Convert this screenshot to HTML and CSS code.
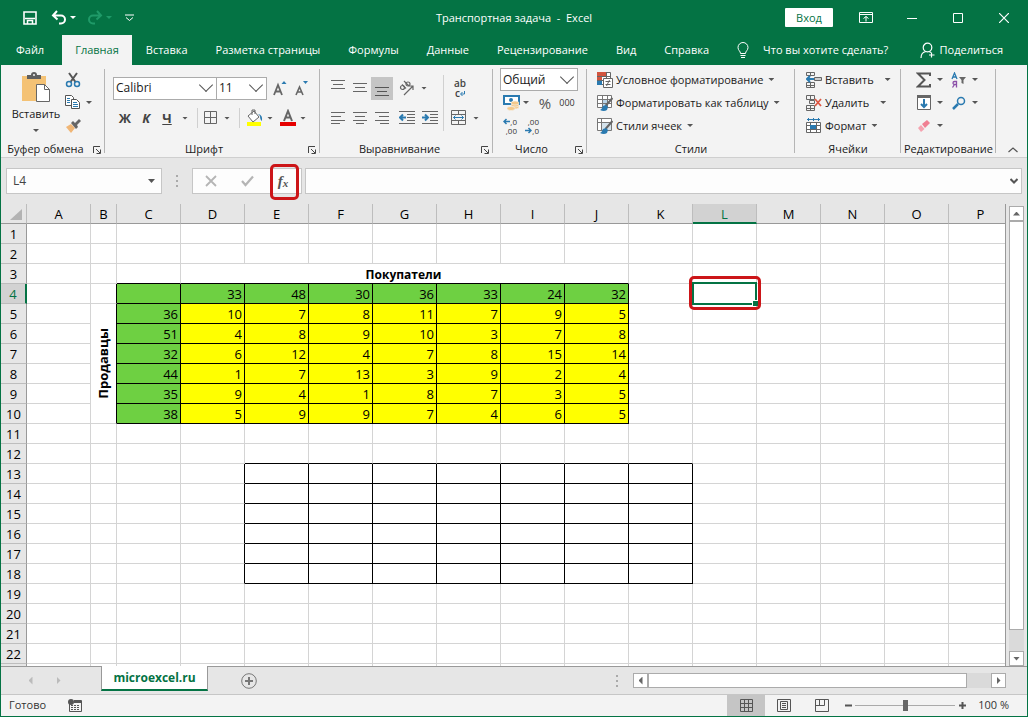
FILE: index.html
```html
<!DOCTYPE html>
<html lang="ru">
<head>
<meta charset="utf-8">
<title>Транспортная задача - Excel</title>
<link rel="stylesheet" href="styles.css">
</head>
<body class="window">
<header class="titlebar">
  <div class="quick">
    <button class="tool" aria-label="Сохранить"><svg width="16" height="16" viewBox="0 0 16 16" fill="none" stroke="#fff" stroke-width="1.600"><path d="M2 2h12v12H2zM3 8.500h10"/><path d="M5.500 14v-3.500h5V14" stroke-width="1.500"/></svg></button>
    <button class="tool" aria-label="Отменить"><svg width="16" height="16" viewBox="0 0 16 16" fill="none" stroke="#fff" stroke-width="2"><path d="M6 1 2 5.500 6.500 9.500M2.500 5.500H10a3.500 3.500 0 0 1 0 8H8"/></svg></button>
    <i class="arrow light"></i>
    <button class="tool redo" aria-label="Повторить"><svg width="16" height="16" viewBox="0 0 16 16" fill="none" stroke="#1f9a68" stroke-width="2"><path d="m10 1 4 4.500-4.500 4M13.500 5.500H6a3.500 3.500 0 0 0 0 8h2"/></svg></button>
    <i class="arrow dim"></i>
    <button class="tool custom" aria-label="Настройка панели"><svg width="9" height="8" viewBox="0 0 9 8" fill="none" stroke="#fff"><path d="M0 1h9M1 3.500l3.500 3L8 3.500"/></svg></button>
  </div>
  <h1 class="doc-title">Транспортная задача&nbsp; -&nbsp; Excel</h1>
  <div class="win-controls">
    <button class="signin">Вход</button>
    <button class="tool" aria-label="Параметры ленты"><svg width="14" height="12" viewBox="0 0 14 12" fill="none" stroke="#fff"><path d="M.5.5h13v10H.5zM.5 2.500h13M7 9.500v-5M4.500 6.500 7 4.500l2.500 2"/></svg></button>
    <button class="tool" aria-label="Свернуть"><svg width="10" height="10" viewBox="0 0 10 10" stroke="#fff"><path d="M0 5.500h10"/></svg></button>
    <button class="tool" aria-label="Развернуть"><svg width="10" height="10" viewBox="0 0 10 10" fill="none" stroke="#fff"><path d="M.5.500h9v9h-9z"/></svg></button>
    <button class="tool" aria-label="Закрыть"><svg width="10" height="10" viewBox="0 0 10 10" stroke="#fff" stroke-width="1.200"><path d="m0 0 10 10M10 0 0 10"/></svg></button>
  </div>
</header>
<nav class="tabs">
  <button class="tab file">Файл</button>
  <button class="tab active">Главная</button>
  <button class="tab">Вставка</button>
  <button class="tab">Разметка страницы</button>
  <button class="tab">Формулы</button>
  <button class="tab">Данные</button>
  <button class="tab">Рецензирование</button>
  <button class="tab">Вид</button>
  <button class="tab">Справка</button>
  <button class="tab tell"><svg width="12" height="17" viewBox="0 0 12 17" fill="none" stroke="#fff"><path d="M3.500 11.500C3.500 9 1 8.500 1 5.500a5 5 0 0 1 10 0c0 3-2.500 3.500-2.500 6zM3.500 13.500h5M4 15.500h4"/></svg>Что вы хотите сделать?</button>
  <button class="tab share"><svg width="16" height="17" viewBox="0 0 16 17" fill="none" stroke="#fff" stroke-width="1.200"><circle cx="7.500" cy="5.500" r="4.300"/><path d="M1 16c0-4 2-6 5-6.500M9 9.500l2 1M11.500 10.500v5M9 13h5.500"/></svg>Поделиться</button>
</nav>

<section class="ribbon">
  <div class="group clipboard">
    <div class="body">
      <button class="paste"><svg width="30" height="31" viewBox="0 0 30 31"><path d="M1 4h24v25H1z" fill="#f4c275"/><path d="M6 3h4a3 3 0 0 1 6 0h4v4H6z" fill="#5f5f5f"/><circle cx="13" cy="3" r="1" fill="#f3f3f3"/><path d="M15.500 12.500h8l5 5v12h-13z" fill="#fff" stroke="#666"/><path d="M23.500 12.500v5h5" fill="none" stroke="#666"/></svg><span>Вставить</span><i class="arrow"></i></button>
      <div class="stack">
        <div class="row"><button class="tool" aria-label="Вырезать"><svg width="16" height="16" viewBox="0 0 16 16" fill="none"><path d="m4 1 6.500 9M12 1 5.500 10" stroke="#555" stroke-width="2"/><circle cx="4" cy="12" r="2.500" stroke="#2a7ab0" stroke-width="1.500"/><circle cx="12" cy="12" r="2.500" stroke="#2a7ab0" stroke-width="1.500"/></svg></button></div>
        <div class="row"><button class="tool" aria-label="Копировать"><svg width="16" height="15" viewBox="0 0 16 15" fill="#fff" stroke="#555"><path d="M.500.500h6l2 2v8h-8z"/><path d="M6.500 4.500h5l3 3v6h-8z"/><path d="M2 3.500h3M2 5.500h3M2 7.500h3M8 7.500h4M8 9.500h5M8 11.500h5" stroke="#2a7ab0"/></svg></button><i class="arrow"></i></div>
        <div class="row"><button class="tool" aria-label="Формат по образцу"><svg width="16" height="15" viewBox="0 0 16 15"><path d="m1 9 5-3 4 4-4 5z" fill="#f0b676"/><path d="m6 5 2-2 2 2 4-4 2 2-4 4 1 2-2 2z" fill="#666"/></svg></button></div>
      </div>
    </div>
    <div class="caption">Буфер обмена<button class="launch" aria-label="Параметры буфера"><svg width="8" height="8" viewBox="0 0 8 8" fill="none" stroke="#444"><path d="M.5 7V.5H7M3 3l4 4M7.500 3.500v4h-4"/></svg></button></div>
  </div>

  <div class="group font">
    <div class="body two">
      <div class="row">
        <label class="combo face"><select aria-label="Шрифт"><option>Calibri</option></select></label>
        <label class="combo size"><select aria-label="Размер"><option>11</option></select></label>
        <button class="tool w22" aria-label="Увеличить шрифт"><svg width="15" height="17" viewBox="0 0 15 17" fill="none" stroke="#666" stroke-width="1.800"><path d="m1 15 4-10 4 10M2.500 11.500h5"/><path d="m8.500 4 2.500-3 2.500 3z" fill="#2a7ab0" stroke="none"/></svg></button>
        <button class="tool w22" aria-label="Уменьшить шрифт"><svg width="14" height="17" viewBox="0 0 14 17" fill="none" stroke="#666" stroke-width="1.600"><path d="m1 15 3.500-8L8 15M2.500 12h4"/><path d="m8 1 2.500 3L13 1z" fill="#2a7ab0" stroke="none"/></svg></button>
      </div>
      <div class="row">
        <button class="tool w24 letter">Ж</button><button class="tool w18 letter italic">К</button><button class="tool w24 letter under">Ч</button><i class="arrow"></i>
        <i class="bar"></i>
        <button class="tool" aria-label="Границы"><svg width="14" height="14" viewBox="0 0 14 14" fill="none" stroke="#666"><path d="M.500.500h12v12H.500zM6.500.500v12M.500 6.500h12"/></svg></button><i class="arrow wide"></i>
        <i class="bar"></i>
        <button class="tool" aria-label="Цвет заливки"><svg width="18" height="18" viewBox="0 0 18 18"><path d="M1 13h14v4H1z" fill="#ff0"/><path d="m2 7 6-5 5 6-6 5z" fill="#fff" stroke="#666"/><path d="M6 6V1h3v4" fill="none" stroke="#666"/><path d="M12 5q5 1 4 7-2-1-2-5z" fill="#2a7ab0"/></svg></button><i class="arrow"></i>
        <button class="tool push-l" aria-label="Цвет текста"><svg width="18" height="18" viewBox="0 0 18 18"><path d="M1 13h16v4H1z" fill="#e60000"/><path d="m5 12 4-10 4 10M6.500 8.500h5" fill="none" stroke="#666" stroke-width="2"/></svg></button><i class="arrow"></i>
      </div>
    </div>
    <div class="caption">Шрифт<button class="launch" aria-label="Параметры шрифта"><svg width="8" height="8" viewBox="0 0 8 8" fill="none" stroke="#444"><path d="M.5 7V.5H7M3 3l4 4M7.500 3.500v4h-4"/></svg></button></div>
  </div>

  <div class="group align">
    <div class="body cols">
      <div class="two">
        <div class="row">
          <button class="tool w22" aria-label="По верхнему краю"><svg width="14" height="16" viewBox="0 0 14 16" stroke="#666"><path d="M0 .500h14M2 4.500h10M0 8.500h14"/></svg></button>
          <button class="tool w22" aria-label="По середине"><svg width="14" height="16" viewBox="0 0 14 16" stroke="#666"><path d="M0 3.500h14M2 7.500h10M0 11.500h14"/></svg></button>
          <button class="tool w22 pressed" aria-label="По нижнему краю"><svg width="14" height="16" viewBox="0 0 14 16" stroke="#555"><path d="M0 7.500h14M2 11.500h10M0 15.500h14"/></svg></button>
          <button class="tool w28" aria-label="Ориентация"><svg width="16" height="16" viewBox="0 0 16 16" fill="none" stroke="#666" stroke-width="1.200"><circle cx="3.500" cy="7.500" r="2"/><path d="m3 4.500 4 4M5 1l5 5"/><circle cx="9" cy="4" r="2"/><path d="m5 15 9-9M14 10V6h-4"/></svg></button><i class="arrow near"></i>
        </div>
        <div class="row">
          <button class="tool w22" aria-label="По левому краю"><svg width="14" height="12" viewBox="0 0 14 12" stroke="#666"><path d="M0 .500h14M0 4.500h10M0 8.500h14M0 11.500h9"/></svg></button>
          <button class="tool w22" aria-label="По центру"><svg width="14" height="12" viewBox="0 0 14 12" stroke="#666"><path d="M0 .500h14M2 4.500h10M0 8.500h14M3 11.500h8"/></svg></button>
          <button class="tool w22" aria-label="По правому краю"><svg width="14" height="12" viewBox="0 0 14 12" stroke="#666"><path d="M0 .500h14M4 4.500h10M0 8.500h14M5 11.500h9"/></svg></button>
          <button class="tool w28" aria-label="Уменьшить отступ"><svg width="16" height="14" viewBox="0 0 16 14" fill="none" stroke="#666"><path d="M0 .500h16M8 3.500h8M8 6.500h8M8 9.500h8M0 12.500h16"/><path d="M7 6.500H1M4 3.500l-3 3 3 3" stroke="#2a7ab0" stroke-width="2"/></svg></button>
          <button class="tool w18" aria-label="Увеличить отступ"><svg width="16" height="14" viewBox="0 0 16 14" fill="none" stroke="#666"><path d="M0 .500h16M8 3.500h8M8 6.500h8M8 9.500h8M0 12.500h16"/><path d="M0 6.500h6M3 3.500l3 3-3 3" stroke="#2a7ab0" stroke-width="2"/></svg></button>
        </div>
      </div>
      <i class="bar tall"></i>
      <div class="two">
        <div class="row"><button class="tool wrap" aria-label="Перенести текст"><span>ab</span><span>c<svg width="5" height="5" viewBox="0 0 5 5" fill="none" stroke="#2a7ab0"><path d="M4.500 0v3H1M2.500 1 .5 3l2 2"/></svg></span></button></div>
        <div class="row"><button class="tool" aria-label="Объединить"><svg width="16" height="16" viewBox="0 0 16 16" fill="none" stroke="#666"><path d="M.500.500h14v14H.500zM.500 4.500h14M.500 10.500h14M7.500.500v4M7.500 10.500v4"/><path d="M2.500 7.500h10M4.500 5.500l-2 2 2 2M10.500 5.500l2 2-2 2" stroke="#2a7ab0"/></svg></button><i class="arrow wide"></i></div>
      </div>
    </div>
    <div class="caption">Выравнивание<button class="launch" aria-label="Параметры выравнивания"><svg width="8" height="8" viewBox="0 0 8 8" fill="none" stroke="#444"><path d="M.5 7V.5H7M3 3l4 4M7.500 3.500v4h-4"/></svg></button></div>
  </div>

  <div class="group number">
    <div class="body stack">
      <div class="row"><label class="combo format"><select aria-label="Числовой формат"><option>Общий</option></select></label></div>
      <div class="row inset"><button class="tool" aria-label="Денежный формат"><svg width="17" height="17" viewBox="0 0 17 17"><path d="M1 2h15v8H1z" fill="#fff" stroke="#2a7ab0" stroke-width="2"/><circle cx="8" cy="6" r="2" fill="#2a7ab0"/><g fill="#f4c98a" stroke="#f3f3f3" stroke-width=".6"><ellipse cx="12" cy="13" rx="4" ry="2"/><ellipse cx="12" cy="11" rx="4" ry="2"/><ellipse cx="12" cy="9" rx="4" ry="2"/><ellipse cx="8" cy="14.500" rx="4" ry="2"/></g></svg></button><i class="arrow"></i><button class="tool percent">%</button><button class="tool zeros">000</button></div>
      <div class="row inset"><button class="tool digits" aria-label="Увеличить разрядность"><span><svg width="7" height="7" viewBox="0 0 7 7" fill="none" stroke="#2a7ab0" stroke-width="1.500"><path d="M7 3.500H1M3.500 1 1 3.500 3.500 6"/></svg>,0</span><span>,00</span></button><button class="tool digits" aria-label="Уменьшить разрядность"><span>,00</span><span><svg width="7" height="7" viewBox="0 0 7 7" fill="none" stroke="#2a7ab0" stroke-width="1.500"><path d="M0 3.500h6M3.500 1 6 3.500 3.500 6"/></svg>,0</span></button></div>
    </div>
    <div class="caption">Число<button class="launch" aria-label="Параметры числа"><svg width="8" height="8" viewBox="0 0 8 8" fill="none" stroke="#444"><path d="M.5 7V.5H7M3 3l4 4M7.500 3.500v4h-4"/></svg></button></div>
  </div>

  <div class="group styles">
    <div class="body stack">
      <button class="row command"><svg width="16" height="16" viewBox="0 0 16 16" fill="#fff" stroke="#666"><path d="M.500.500h13v12H.500zM.500 4.500h13M.500 8.500h13M9.500.500v12"/><path d="M0 0h9v4H0zM0 5h5v3H0z" fill="#d2553f" stroke="none"/><path d="M0 9h5v4H0z" fill="#2a7ab0" stroke="none"/><path d="M6.500 6.500h9v9h-9z"/><path d="M8.500 9.500h5M8.500 12.500h5M12.500 8l-3 6"/></svg><span>Условное форматирование</span><i class="arrow"></i></button>
      <button class="row command"><svg width="16" height="16" viewBox="0 0 16 16" fill="#fff" stroke="#777"><path d="M.500.500h14v12H.500zM.500 4.500h14M.500 8.500h14M5.500.500v12M10.500.500v12"/><path d="M6 5h4v3H6zM6 9h4v3H6z" fill="#b9d5e8" stroke="none"/><path d="m15.500 3-7 8" stroke="#666" stroke-width="2"/><path d="M3 15q2-1 3-4l3-1 2 2-1 3q-3 2-7 0z" fill="#2a7ab0" stroke="none"/></svg><span>Форматировать как таблицу</span><i class="arrow"></i></button>
      <button class="row command"><svg width="16" height="16" viewBox="0 0 16 16" fill="#fff" stroke="#777"><path d="M.500.500h14v12H.500zM.500 4.500h14M4.500.500v12"/><path d="M5 5h9v7H5z" fill="#d5e3ec" stroke="none"/><path d="m15.500 3-7 8" stroke="#666" stroke-width="2"/><path d="M3 15q2-1 3-4l3-1 2 2-1 3q-3 2-7 0z" fill="#2a7ab0" stroke="none"/></svg><span>Стили ячеек</span><i class="arrow"></i></button>
    </div>
    <div class="caption">Стили</div>
  </div>

  <div class="group cells">
    <div class="body stack">
      <button class="row command"><svg width="16" height="16" viewBox="0 0 16 16" fill="none" stroke="#666"><path d="M.500.500h8v3h-8zM4.500.500v3M.500 10.500h8v5h-8zM4.500 10.500v5M.500 13.500h8"/><path d="M8.500 5.500h7v3h-7z" fill="#ccc"/><path d="M8 7H1M4 4 1 7l3 3" stroke="#2a7ab0" stroke-width="2"/></svg><span>Вставить</span><i class="arrow far"></i></button>
      <button class="row command"><svg width="16" height="16" viewBox="0 0 16 16" fill="none" stroke="#666"><path d="M.500.500h8v4h-8zM4.500.500v4M.500 10.500h8v5h-8zM4.500 10.500v5M.500 13.500h8M3.500 5.500h5v3h-5z"/><path d="m9 4 6 7M15 4l-6 7" stroke="#dc5844" stroke-width="1.800"/></svg><span>Удалить</span><i class="arrow far"></i></button>
      <button class="row command"><svg width="16" height="16" viewBox="0 0 16 16" fill="#fff" stroke="#666"><path d="M.500 4.500h14v10H.500zM.500 7.500h14M.500 11.500h14M4.500 4.500v10M10.500 4.500v10"/><path d="M4 7h6v4H4z" fill="#2a7ab0" stroke="none"/><path d="M1 1.500h13M2.500 0v3M12.500 0v3M7.500 0v3" stroke="#2a7ab0"/></svg><span>Формат</span><i class="arrow"></i></button>
    </div>
    <div class="caption">Ячейки</div>
  </div>

  <div class="group editing">
    <div class="body stack">
      <div class="row"><button class="tool w20" aria-label="Автосумма"><svg width="16" height="16" viewBox="0 0 16 16" fill="none" stroke="#555" stroke-width="2"><path d="M14 4V1.500H2L8.500 8 2 14.500h12V12"/></svg></button><i class="arrow"></i><button class="tool w20 gap" aria-label="Сортировка и фильтр"><svg width="16" height="16" viewBox="0 0 16 16" fill="none"><path d="m1 7 2.500-6L6 7M2 5h3" stroke="#2a7ab0" stroke-width="1.300"/><path d="M5.500 15.500v-6h-2a1.500 1.500 0 0 0 0 3h2M3.500 12.500l-2 3" stroke="#8b4fa8" stroke-width="1.300"/><path d="M8 5h7l-2.500 3v4l-2-1V8z" fill="#666"/></svg></button><i class="arrow"></i></div>
      <div class="row"><button class="tool w20" aria-label="Заполнить"><svg width="14" height="15" viewBox="0 0 14 15" fill="#fff" stroke="#666"><path d="M.500.500h13v14H.500z"/><path d="M0 0h14v3H0z" fill="#666" stroke="none"/><path d="M7 4v8M4 9l3 3 3-3" fill="none" stroke="#2a7ab0" stroke-width="2"/></svg></button><i class="arrow"></i><button class="tool w20 gap" aria-label="Найти"><svg width="14" height="14" viewBox="0 0 14 14" fill="none" stroke="#2a7ab0"><circle cx="9" cy="5" r="3.500" stroke-width="1.500"/><path d="m1 13 5-5" stroke-width="2.500"/></svg></button><i class="arrow"></i></div>
      <div class="row"><button class="tool w20" aria-label="Очистить"><svg width="14" height="14" viewBox="0 0 14 14"><path d="m5 5 5-4 3 3-5 5z" fill="#f07f92"/><path d="m4 6 3.500 4L4 13 1 9z" fill="#f5a3b0"/></svg></button><i class="arrow"></i></div>
    </div>
    <div class="caption">Редактирование</div>
  </div>
  <button class="collapse" aria-label="Свернуть ленту"><svg width="10" height="6" viewBox="0 0 10 6" fill="none" stroke="#555" stroke-width="1.200"><path d="m.500 5 4.500-4 4.500 4"/></svg></button>
</section>

<section class="formula">
  <div class="namebox"><input value="L4" aria-label="Имя ячейки"><i class="arrow"></i></div>
  <i class="dots"></i>
  <div class="entry">
    <button class="tool" aria-label="Отмена"><svg width="12" height="12" viewBox="0 0 12 12" stroke="#b5b5b5" stroke-width="1.800"><path d="m1 1 10 10M11 1 1 11"/></svg></button>
    <button class="tool" aria-label="Ввод"><svg width="13" height="12" viewBox="0 0 13 12" fill="none" stroke="#b5b5b5" stroke-width="2.200"><path d="m1 6 3.500 4L12 1.500"/></svg></button>
    <button class="tool fx" aria-label="Вставить функцию"><span>f</span><small>x</small></button>
  </div>
  <label class="bar-input"><input aria-label="Строка формул"><svg width="8" height="6" viewBox="0 0 8 6" fill="none" stroke="#555" stroke-width="2"><path d="m.500 1 3.500 3.500L7.500 1"/></svg></label>
</section>

<main class="workspace">
  <div class="grid">
    <table class="sheet">
      <colgroup><col class="c-head"><col class="c"><col class="c-narrow"><col class="c" span="13"><col></colgroup>
      <thead><tr><th class="corner"><svg width="12" height="12" viewBox="0 0 12 12"><path d="M12 0v11H0z" fill="#b3b3b3"/></svg></th><th>A</th><th>B</th><th>C</th><th>D</th><th>E</th><th>F</th><th>G</th><th>H</th><th>I</th><th>J</th><th>K</th><th class="sel">L</th><th>M</th><th>N</th><th>O</th><th>P</th></tr></thead>
      <tbody>
        <tr><th>1<td><td><td><td><td><td><td><td><td><td><td><td><td><td><td><td></tr>
        <tr><th>2<td><td><td><td><td><td><td><td><td><td><td><td><td><td><td><td></tr>
        <tr><th>3<td><td><td class="u"><td class="u buyers" colspan="7">Покупатели<td><td><td><td><td><td></tr>
        <tr><th class="sel">4<td><td class="r"><td class="g"><td class="g">33<td class="g">48<td class="g">30<td class="g">36<td class="g">33<td class="g">24<td class="g">32<td><td class="cursor"><i class="selection"></i><i class="mark"></i><td><td><td><td></tr>
        <tr><th>5<td><td class="r sellers" rowspan="6"><span>Продавцы</span><td class="g">36<td class="y">10<td class="y">7<td class="y">8<td class="y">11<td class="y">7<td class="y">9<td class="y">5<td><td><td><td><td><td></tr>
        <tr><th>6<td><td class="g">51<td class="y">4<td class="y">8<td class="y">9<td class="y">10<td class="y">3<td class="y">7<td class="y">8<td><td><td><td><td><td></tr>
        <tr><th>7<td><td class="g">32<td class="y">6<td class="y">12<td class="y">4<td class="y">7<td class="y">8<td class="y">15<td class="y">14<td><td><td><td><td><td></tr>
        <tr><th>8<td><td class="g">44<td class="y">1<td class="y">7<td class="y">13<td class="y">3<td class="y">9<td class="y">2<td class="y">4<td><td><td><td><td><td></tr>
        <tr><th>9<td><td class="g">35<td class="y">9<td class="y">4<td class="y">1<td class="y">8<td class="y">7<td class="y">3<td class="y">5<td><td><td><td><td><td></tr>
        <tr><th>10<td><td class="g">38<td class="y">5<td class="y">9<td class="y">9<td class="y">7<td class="y">4<td class="y">6<td class="y">5<td><td><td><td><td><td></tr>
        <tr><th>11<td><td><td><td><td><td><td><td><td><td><td><td><td><td><td><td></tr>
        <tr><th>12<td><td><td><td><td class="u"><td class="u"><td class="u"><td class="u"><td class="u"><td class="u"><td class="u"><td><td><td><td><td></tr>
        <tr><th>13<td><td><td><td class="r"><td class="k"><td class="k"><td class="k"><td class="k"><td class="k"><td class="k"><td class="k"><td><td><td><td><td></tr>
        <tr><th>14<td><td><td><td class="r"><td class="k"><td class="k"><td class="k"><td class="k"><td class="k"><td class="k"><td class="k"><td><td><td><td><td></tr>
        <tr><th>15<td><td><td><td class="r"><td class="k"><td class="k"><td class="k"><td class="k"><td class="k"><td class="k"><td class="k"><td><td><td><td><td></tr>
        <tr><th>16<td><td><td><td class="r"><td class="k"><td class="k"><td class="k"><td class="k"><td class="k"><td class="k"><td class="k"><td><td><td><td><td></tr>
        <tr><th>17<td><td><td><td class="r"><td class="k"><td class="k"><td class="k"><td class="k"><td class="k"><td class="k"><td class="k"><td><td><td><td><td></tr>
        <tr><th>18<td><td><td><td class="r"><td class="k"><td class="k"><td class="k"><td class="k"><td class="k"><td class="k"><td class="k"><td><td><td><td><td></tr>
        <tr><th>19<td><td><td><td><td><td><td><td><td><td><td><td><td><td><td><td></tr>
        <tr><th>20<td><td><td><td><td><td><td><td><td><td><td><td><td><td><td><td></tr>
        <tr><th>21<td><td><td><td><td><td><td><td><td><td><td><td><td><td><td><td></tr>
        <tr><th>22<td><td><td><td><td><td><td><td><td><td><td><td><td><td><td><td></tr>
        <tr><th><td><td><td><td><td><td><td><td><td><td><td><td><td><td><td><td></tr>
      </tbody>
    </table>
  </div>
  <div class="vscroll">
    <button class="scroll-btn" aria-label="Вверх"><i class="tri up"></i></button>
    <div class="vtrack"><div class="vthumb"></div></div>
    <button class="scroll-btn" aria-label="Вниз"><i class="tri down"></i></button>
  </div>
</main>

<div class="sheetbar">
  <div class="sheet-nav"><button class="tool" aria-label="Предыдущий лист"><i class="tri left faint"></i></button><button class="tool" aria-label="Следующий лист"><i class="tri right faint"></i></button></div>
  <button class="sheet-tab">microexcel.ru</button>
  <button class="tool add" aria-label="Новый лист"><svg width="16" height="16" viewBox="0 0 16 16" fill="none" stroke="#777"><circle cx="8" cy="8" r="7.300"/><path d="M8 4v8M4 8h8" stroke-width="2"/></svg></button>
  <i class="dots push"></i>
  <div class="hscroll">
    <button class="scroll-btn" aria-label="Влево"><i class="tri left"></i></button>
    <div class="htrack"><div class="hthumb"></div></div>
    <button class="scroll-btn" aria-label="Вправо"><i class="tri right"></i></button>
  </div>
</div>

<footer class="status">
  <span class="ready">Готово</span>
  <button class="tool" aria-label="Запись макроса"><svg width="14" height="13" viewBox="0 0 14 13" fill="none" stroke="#555"><path d="M1.500 5v7.500h12V1.500H6"/><path d="M6 1h7v3H6z" fill="#555" stroke="none"/><circle cx="3" cy="3" r="3" fill="#555" stroke="none"/><path d="M3 6.500h9M3 8.500h9M3 10.500h9" stroke-dasharray="2 1"/></svg></button>
  <div class="views">
    <button class="tool view on" aria-label="Обычный"><svg width="13" height="13" viewBox="0 0 13 13" fill="none" stroke="#555"><path d="M.500.500h12v12H.500zM.500 4.500h12M.500 8.500h12M4.500.500v12M8.500.500v12"/></svg></button>
    <button class="tool view" aria-label="Разметка"><svg width="14" height="13" viewBox="0 0 14 13" fill="none" stroke="#555"><path d="M.500.500h13v12H.500zM3.500 2.500h7v8h-7zM5 4.500h4M5 6.500h4M5 8.500h4"/></svg></button>
    <button class="tool view" aria-label="Страничный"><svg width="14" height="13" viewBox="0 0 14 13" fill="none" stroke="#555"><path d="M.500.500h13v12H.500zM4.500.500v6M9.500.500v6M.500 6.500h9"/></svg></button>
  </div>
  <button class="tool zoom-btn" aria-label="Уменьшить"><svg width="7" height="7" viewBox="0 0 7 7" stroke="#555" stroke-width="2"><path d="M0 3.500h7"/></svg></button>
  <input class="zoom" type="range" min="0" max="200" value="100" aria-label="Масштаб">
  <button class="tool zoom-btn" aria-label="Увеличить"><svg width="7" height="7" viewBox="0 0 7 7" stroke="#555" stroke-width="2"><path d="M0 3.500h7M3.500 0v7"/></svg></button>
  <span class="percent-text">100 %</span>
</footer>
</body>
</html>
```
FILE: styles.css
```css
*, *::before, *::after { box-sizing: border-box; }
button, input, select { font: inherit; color: inherit; margin: 0; padding: 0; border: 0; background: none; }
svg { display: block; flex: none; }
i { display: block; flex: none; }

.window {
  margin: 0;
  height: 100vh;
  display: flex;
  flex-direction: column;
  border: 1px solid #047344;
  border-top: 0;
  background: #e6e6e6;
  color: #1a1a1a;
  font: 11px/16px "Open Sans", "Noto Sans", sans-serif;
  overflow: hidden;
}

.tool { display: flex; align-items: center; justify-content: center; flex: none; }
.w18 { width: 18px; }
.w20 { width: 20px; }
.w22 { width: 22px; }
.w24 { width: 24px; }
.w28 { width: 28px; }

.arrow { width: 6px; height: 3px; margin: 0 3px; background: #555; clip-path: polygon(0 0, 100% 0, 50% 100%); }
.arrow.near { margin: 0; }
.arrow.wide { margin-left: 6px; }
.arrow.light { background: #fff; }
.arrow.dim { background: #1f9a68; }

/* Title bar */
.titlebar { display: grid; grid-template-columns: 1fr auto 1fr; align-items: center; height: 35px; background: #047344; color: #fff; }
.quick { display: flex; align-items: center; padding-left: 21px; }
.quick .tool { width: 16px; }
.quick .tool + .tool { margin-left: 13px; }
.quick .redo { margin-left: 8px; }
.quick .custom { margin-left: 6px; }
.doc-title { margin: 0; font-size: 11px; font-weight: 400; }
.win-controls { display: flex; align-items: center; justify-content: flex-end; height: 32px; }
.win-controls .tool { width: 46px; height: 32px; }
.signin { width: 48px; height: 19px; margin-right: 10px; background: #fff; color: #047344; border-radius: 1px; }

/* Ribbon tabs */
.tabs { display: flex; height: 30px; background: #047344; color: #fff; }
.tab { display: flex; align-items: center; padding: 0 14px; white-space: nowrap; flex: none; }
.tab.file { padding: 0 18px 0 15px; }
.tab.active { background: #f3f3f3; color: #047344; padding: 0 13px; }
.tab.tell { gap: 14px; }
.tab.share { gap: 4px; margin-left: auto; padding: 0 24px 0 0; }

/* Ribbon */
.ribbon { display: flex; height: 93px; background: #f3f3f3; border-bottom: 1px solid #cfcfcf; flex: none; }
.group { position: relative; display: flex; flex-direction: column; flex: none; }
.group::after { content: ""; position: absolute; right: 0; top: 4px; bottom: 4px; width: 1px; background: #b5b5b5; }
.clipboard { width: 104px; }
.font { width: 215px; }
.align { width: 173px; }
.number { width: 94px; }
.styles { width: 208px; }
.cells { width: 106px; }
.editing { width: 95px; }
.body { display: flex; height: 76px; }
.row { display: flex; align-items: center; }
.stack { display: flex; flex-direction: column; padding-top: 3px; }
.stack .row { height: 23px; }
.two { display: flex; flex-direction: column; padding-top: 8px; }
.two .row { height: 30px; }
.caption { position: relative; height: 16px; text-align: center; white-space: nowrap; }
.launch { position: absolute; right: 4px; top: 5px; }
.clipboard .caption { padding-right: 15px; }
.font .caption, .number .caption { padding-right: 17px; }
.align .caption { padding-right: 14px; }

.paste { display: flex; flex-direction: column; align-items: center; width: 64px; padding: 7px 0 0 6px; }
.paste span { margin: 3px 0 7px; }
.clipboard .arrow { margin-left: 5px; }
.clipboard .paste .arrow { margin: 0; }

.combo { display: grid; align-items: center; height: 23px; background: #fff; border: 1px solid #ababab; font-size: 12px; }
.combo select, .combo::after { grid-area: 1 / 1; }
.combo select { appearance: none; width: 100%; height: 100%; padding-left: 2px; }
.combo::after { content: ""; justify-self: end; width: 10px; height: 10px; margin: 0 5px 6px 0; border: solid #555; border-width: 0 1px 1px 0; transform: rotate(45deg); pointer-events: none; }
.face { width: 104px; }
.size { width: 51px; margin: 0 2px 0 -1px; }
.format { width: 78px; }

.font .body { padding-left: 8px; }
.letter { font-size: 13px; font-weight: 700; color: #444; }
.italic { font-style: italic; }
.under { text-decoration: underline; }
.bar { width: 1px; height: 20px; margin: 0 6px; background: #d0d0d0; }
.bar.tall { height: 56px; margin: 10px 7px 0 4px; }
.push-l { margin-left: 3px; }
.align .body { padding-left: 7px; }
.pressed { height: 23px; background: #c5c5c5; }
.wrap { flex-direction: column; width: 18px; line-height: 10px; color: #444; font-size: 10px; font-weight: 600; }
.wrap span { display: flex; align-items: center; }

.number .stack { padding-left: 7px; }
.number .inset { padding-left: 3px; }
.percent { width: 18px; margin-left: 4px; font-size: 15px; color: #555; }
.zeros { width: 18px; margin-left: 4px; font-size: 9px; color: #333; }
.digits { flex-direction: column; align-items: flex-end; width: 14px; margin-right: 8px; font-size: 8px; line-height: 9px; color: #333; }
.digits span { display: flex; align-items: center; }
.styles .stack { padding-left: 10px; }
.cells .stack { padding-left: 11px; }
.editing .stack { padding-left: 13px; }
.command { gap: 3px; white-space: nowrap; }
.command .arrow { margin: 0 0 0 2px; }
.command .arrow.far { margin-left: 8px; }
.gap { margin-left: 3px; }
.collapse { margin: auto 9px 4px auto; }

/* Formula bar */
.formula { display: flex; align-items: center; height: 46px; padding: 0 5px; flex: none; font-size: 12px; }
.formula input { flex: 1; min-width: 0; padding-left: 6px; }
.namebox, .entry, .bar-input { display: flex; align-items: center; height: 26px; background: #fdfdfd; border: 1px solid #c6c6c6; }
.namebox { width: 156px; color: #444; }
.namebox .arrow { width: 7px; height: 4px; margin: 0 6px; }
.dots { width: 2px; height: 12px; background: repeating-linear-gradient(#aaa 0 2px, transparent 2px 5px); }
.formula .dots { margin: 0 14px; }
.entry { width: 110px; }
.entry .tool { width: 36px; height: 24px; }
.entry .fx { position: relative; font: italic 700 15px/16px "Liberation Serif", serif; color: #555; }
.fx small { font-size: 11px; padding-top: 3px; }
.fx::after { content: ""; position: absolute; left: 5px; top: -5px; width: 29px; height: 36px; border: 3px solid #cc1518; border-radius: 5px; }
.bar-input { flex: 1; margin-left: 3px; padding-right: 3px; }

/* Worksheet */
.workspace { display: flex; flex: 1; min-height: 0; }
.grid { flex: 1; min-width: 0; overflow: hidden; background: #fff; border-right: 1px solid #999; }
.sheet { table-layout: fixed; width: 100%; min-width: 1012px; border-spacing: 0; color: #000; font-size: 13px; line-height: 17px; }
.c-head { width: 26px; }
.c { width: 64px; }
.c-narrow { width: 26px; }
.sheet th, .sheet td { height: 20px; padding: 2px 0 0; border: solid #d4d4d4; border-width: 0 1px 1px 0; }
.sheet th { background: #e6e6e6; border-color: #bdbdbd; font-weight: 400; }
.sheet thead th { border-bottom-color: #999; }
.sheet tbody th { border-right-color: #999; }
.sheet thead .sel { background: #d2d2d2; color: #047344; border-bottom: 2px solid #047344; line-height: 16px; }
.sheet tbody .sel { background: #d2d2d2; color: #047344; border-right: 2px solid #047344; }
.corner svg { margin-left: 9px; }
.sheet td { text-align: right; padding-right: 2px; }
.sheet .g { background: #6ed042; border-color: #000; }
.sheet .y { background: #ff0; border-color: #000; }
.sheet .k { border-color: #000; }
.sheet .u { border-bottom-color: #000; }
.sheet .r { border-right-color: #000; }
.sheet .buyers { text-align: center; font-size: 12px; font-weight: 700; }
.sheet .sellers { padding: 0; text-align: center; font-weight: 700; }
.sellers span { display: block; margin: 0 auto; writing-mode: vertical-rl; transform: rotate(180deg); line-height: 25px; }
.cursor { position: relative; }
.selection { position: absolute; inset: -2px -1px -2px -1px; border: 2px solid #047344; }
.selection::after { content: ""; position: absolute; right: -3px; bottom: -3px; width: 6px; height: 6px; background: #047344; border: solid #fff; border-width: 1px 0 0 1px; }
.mark { position: absolute; inset: -8px -5px -7px -4px; border: 3px solid #cc1518; border-radius: 5px; }

.vscroll { display: flex; flex-direction: column; width: 15px; margin: 2px 3px 0 3px; flex: none; }
.scroll-btn { display: flex; align-items: center; justify-content: center; width: 15px; height: 15px; background: #fff; border: 1px solid #ababab; flex: none; }
.vtrack { flex: 1; background: #dadada; }
.vthumb { height: 95%; background: #fff; border: 1px solid #ababab; }
.tri { width: 7px; height: 4px; background: #666; }
.up { clip-path: polygon(50% 0, 100% 100%, 0 100%); }
.down { clip-path: polygon(0 0, 100% 0, 50% 100%); }
.left, .right { width: 4px; height: 8px; }
.left { clip-path: polygon(0 50%, 100% 0, 100% 100%); }
.right { clip-path: polygon(0 0, 100% 50%, 0 100%); }
.faint { background: #bbb; }

/* Sheet tabs */
.sheetbar { display: flex; align-items: center; height: 29px; border-top: 1px solid #999; border-bottom: 1px solid #c6c6c6; flex: none; padding-right: 21px; }
.sheet-nav { display: flex; justify-content: center; gap: 24px; width: 100px; padding-right: 13px; }
.sheet-tab { align-self: flex-start; width: 107px; height: 25px; margin-top: -1px; padding-top: 1px; background: #fff; color: #047344; font-size: 12px; font-weight: 700; border: solid #999; border-width: 0 1px; border-bottom: 2px solid #047344; }
.add { margin-left: 33px; }
.push { margin-left: auto; }
.hscroll { display: flex; width: 373px; margin-left: 15px; }
.htrack { flex: 1; background: #dadada; }
.hthumb { width: 93%; height: 15px; background: #fff; border: 1px solid #ababab; }

/* Status bar */
.status { display: flex; align-items: center; height: 21px; background: #f3f3f3; color: #333; flex: none; }
.ready { margin: 0 22px 2px 8px; }
.views { display: flex; margin-left: auto; }
.view { width: 38px; height: 21px; }
.view.on { background: #c5c5c5; }
.zoom-btn { width: 14px; height: 16px; }
.zoom { appearance: none; width: 100px; height: 14px; background: linear-gradient(#aaa, #aaa) center / 100% 1px no-repeat; }
.zoom::-webkit-slider-thumb { appearance: none; width: 5px; height: 11px; background: #666; }
.percent-text { margin: 0 18px 2px 9px; }
```
